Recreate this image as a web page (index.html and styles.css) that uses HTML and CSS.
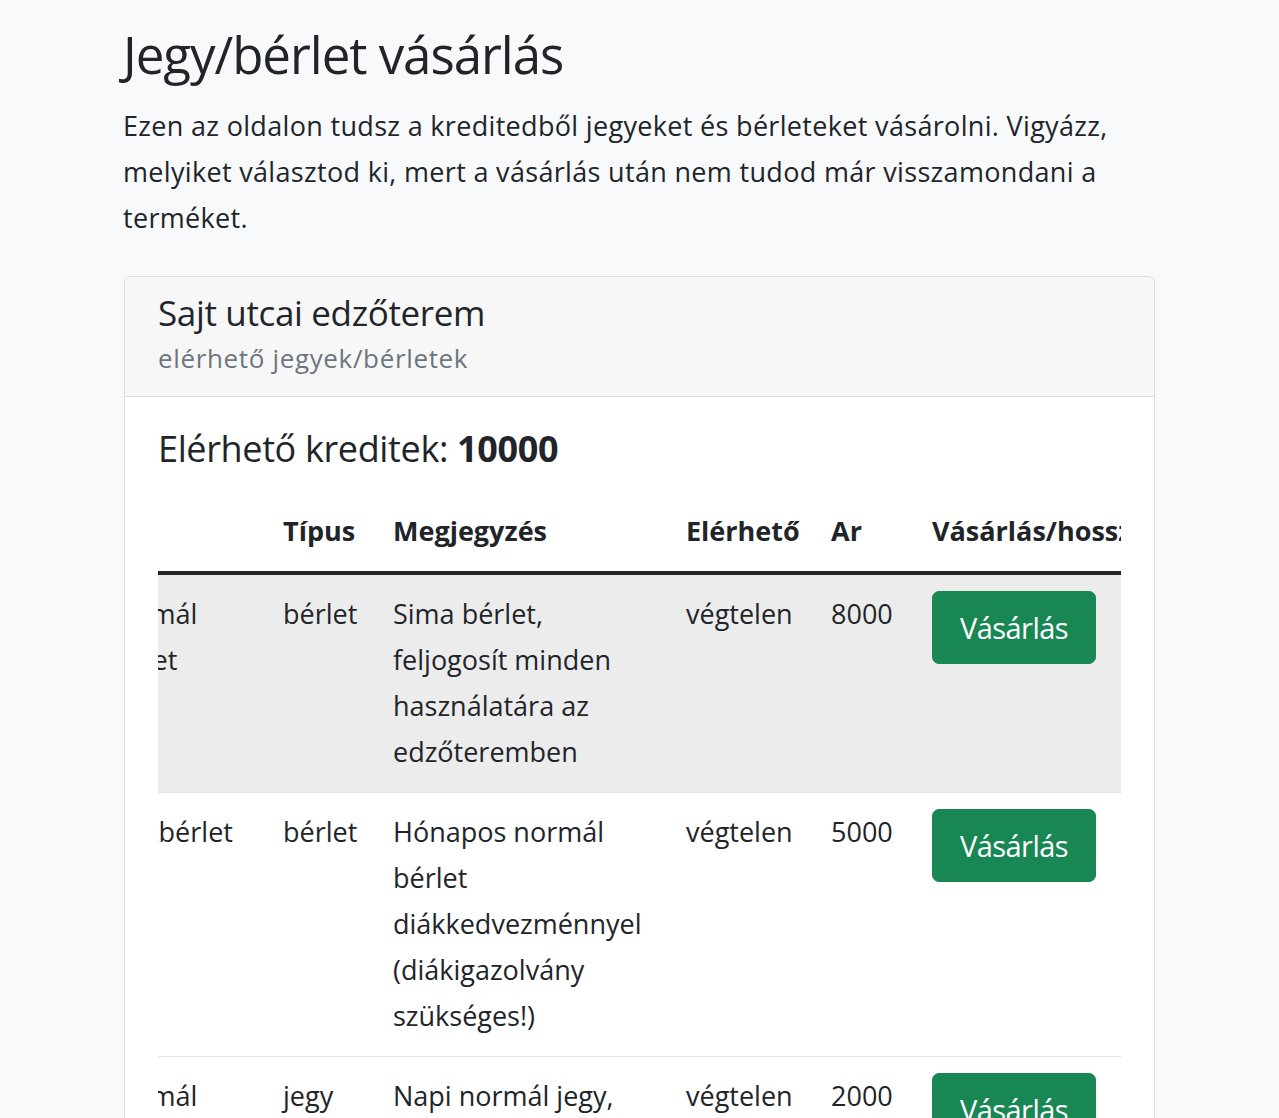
FILE: index.html
```html
<!DOCTYPE html>
<html lang="hu">
<head>
<meta charset="utf-8">
<title>Jegy/bérlet vásárlás</title>
<link rel="stylesheet" href="styles.css">
</head>
<body>
<main class="container">
  <h1 class="page-title">Jegy/bérlet vásárlás</h1>
  <p class="lead">Ezen az oldalon tudsz a kreditedből jegyeket és bérleteket vásárolni. Vigyázz, melyiket választod ki, mert a vásárlás után nem tudod már visszamondani a terméket.</p>

  <section class="card">
    <header class="card-header">
      <h5 class="card-title">Sajt utcai edzőterem</h5>
      <h6 class="card-subtitle">elérhető jegyek/bérletek</h6>
    </header>
    <div class="card-body">
      <h3 class="credits">Elérhető kreditek: <strong>10000</strong></h3>
      <div class="table-responsive">
        <table class="table">
          <colgroup>
            <col class="c-name">
            <col class="c-type">
            <col class="c-note">
            <col class="c-avail">
            <col class="c-price">
            <col class="c-buy">
          </colgroup>
          <thead>
            <tr>
              <th>Név</th>
              <th>Típus</th>
              <th>Megjegyzés</th>
              <th>Elérhető</th>
              <th>Ar</th>
              <th>Vásárlás/hosszabbítás</th>
            </tr>
          </thead>
          <tbody>
            <tr class="row-active">
              <td>Normál bérlet</td>
              <td>bérlet</td>
              <td>Sima bérlet, feljogosít minden használatára az edzőteremben</td>
              <td>végtelen</td>
              <td>8000</td>
              <td><button class="btn" type="button">Vásárlás</button></td>
            </tr>
            <tr>
              <td>Diákbérlet</td>
              <td>bérlet</td>
              <td>Hónapos normál bérlet diákkedvezménnyel (diákigazolvány szükséges!)</td>
              <td>végtelen</td>
              <td>5000</td>
              <td><button class="btn" type="button">Vásárlás</button></td>
            </tr>
            <tr>
              <td>Normál napijegy</td>
              <td>jegy</td>
              <td>Napi normál jegy, egyszeri belépésre jogosít</td>
              <td>végtelen</td>
              <td>2000</td>
              <td><button class="btn" type="button">Vásárlás</button></td>
            </tr>
          </tbody>
        </table>
      </div>
    </div>
  </section>
</main>
<script src="script.js"></script>
</body>
</html>
```

FILE: styles.css
```css
* { box-sizing: border-box; }

html, body {
  margin: 0;
  padding: 0;
}

body {
  background: #f8f9fa;
  color: #212529;
  font-family: "Open Sans", "Noto Sans", "DejaVu Sans", sans-serif;
  font-size: 27px;
  line-height: 46px;
}

.container {
  width: 1031px;
  margin: 0 auto;
  padding-top: 24px;
  padding-bottom: 40px;
}

.page-title {
  margin: 0 0 18px -1px;
  font-size: 51px;
  font-weight: 400;
  line-height: 1.2;
  letter-spacing: -0.02em;
}

.lead {
  margin: 0 0 35px -1px;
  font-size: 27px;
  line-height: 46px;
  letter-spacing: 0.012em;
}

.card {
  background: #fff;
  border: 1px solid #dcdcdc;
  border-radius: 7px;
  overflow: hidden;
}

.card-header {
  background: #f7f7f7;
  border-bottom: 1px solid #dcdcdc;
  padding: 15px 33px 22px;
}

.card-title {
  margin: 0;
  font-size: 35px;
  font-weight: 400;
  line-height: 1.2;
  letter-spacing: -0.01em;
}

.card-subtitle {
  margin: 10px 0 0;
  font-size: 26px;
  font-weight: 400;
  line-height: 1.15;
  letter-spacing: 0.025em;
  color: #6c757d;
}

.card-body {
  padding: 30px 33px 33px;
}

.credits {
  margin: 0 0 22px;
  font-size: 36px;
  font-weight: 400;
  line-height: 1.2;
  letter-spacing: -0.01em;
}

.credits strong {
  font-weight: 700;
}

.table-responsive {
  overflow-x: auto;
}

.table {
  width: 1163px;
  table-layout: fixed;
  border-collapse: collapse;
}

.c-name { width: 180px; }
.c-type { width: 110px; }
.c-note { width: 293px; }
.c-avail { width: 145px; }
.c-price { width: 101px; }
.c-buy { width: 334px; }

.table th,
.table td {
  padding: 16px 17px 17px;
  text-align: left;
}

.table th {
  font-weight: 700;
  vertical-align: bottom;
  white-space: nowrap;
  overflow: hidden;
}

.table thead tr {
  border-bottom: 4px solid #212529;
}

.table td {
  vertical-align: top;
}

.table tbody tr {
  border-bottom: 1px solid #dee2e6;
}

.table tbody tr.row-active {
  background: #ececec;
}

.btn {
  display: flex;
  align-items: center;
  justify-content: center;
  width: 164px;
  height: 73px;
  padding: 0;
  border: 1px solid #198754;
  border-radius: 7px;
  background: #198754;
  color: #fff;
  font-family: inherit;
  font-size: 29px;
  letter-spacing: -0.02em;
  line-height: 1.5;
  cursor: pointer;
}
```

FILE: script.js
```js
document.querySelector('.table-responsive').scrollLeft = 72;
```
